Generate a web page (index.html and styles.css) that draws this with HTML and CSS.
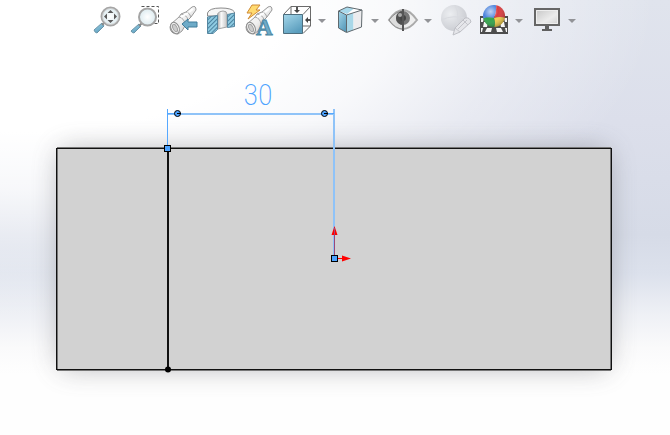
FILE: index.html
```html
<!DOCTYPE html>
<html lang="en">
<head>
<meta charset="utf-8">
<meta name="viewport" content="width=device-width, initial-scale=1">
<title>Model view</title>
<link rel="stylesheet" href="styles.css">
</head>
<body>
<svg class="defs" width="0" height="0" aria-hidden="true">
  <defs>
    <linearGradient id="blue" x1="0" y1="0" x2="0.6" y2="1"><stop offset="0" stop-color="#a5d7ea"/><stop offset="1" stop-color="#5a9dbd"/></linearGradient>
    <linearGradient id="metal" x1="0" y1="0" x2="1" y2="1"><stop offset="0" stop-color="#fff"/><stop offset="0.5" stop-color="#f0f0f0"/><stop offset="1" stop-color="#b5b5b5"/></linearGradient>
    <linearGradient id="bore"><stop offset="0" stop-color="#a8a8a8"/><stop offset="0.4" stop-color="#fafafa"/><stop offset="1" stop-color="#c4c4c4"/></linearGradient>
    <radialGradient id="glass"><stop offset="0" stop-color="#fff"/><stop offset="1" stop-color="#dcebf0"/></radialGradient>
    <radialGradient id="shine" cx="0.35" cy="0.3" r="0.75"><stop offset="0" stop-color="#fff" stop-opacity="0.65"/><stop offset="0.45" stop-color="#fff" stop-opacity="0"/><stop offset="1" stop-color="#000" stop-opacity="0.3"/></radialGradient>
    <radialGradient id="ghost" cx="0.35" cy="0.35" r="0.75"><stop offset="0" stop-color="#eceef1"/><stop offset="1" stop-color="#c7c9cf"/></radialGradient>
    <linearGradient id="screen" x1="0" y1="0" x2="1" y2="1"><stop offset="0" stop-color="#c4c4c4"/><stop offset="0.6" stop-color="#ececec"/><stop offset="1" stop-color="#cfcfcf"/></linearGradient>
    <pattern id="hatch" width="3" height="3" patternUnits="userSpaceOnUse" patternTransform="rotate(45)"><rect width="3" height="3" fill="#8ecbe2"/><rect width="1" height="3" fill="#4a829f"/></pattern>
    <clipPath id="ball"><circle cx="15" cy="12" r="11"/></clipPath>
    <symbol id="caret" viewBox="0 0 10 6"><path d="M1 1h8L5 5z" fill="#929397"/></symbol>
    <symbol id="scope" viewBox="0 0 30 34">
      <path d="M3 20L11 13L13 10L18 8L24 3Q28 1 28 6L23 13L20 16L18 20L14 27L10 30Q2 30 2 23z" fill="url(#metal)" stroke="#999"/>
      <path d="M11 13Q16 14 17 20M13 10Q19 11 20 16M18 8Q22 9 23 13" fill="none" stroke="#a8a8a8"/>
      <path d="M13 13L20 9M21 8L25 5" stroke="#fff" stroke-width="2"/>
      <ellipse cx="7" cy="24" rx="4" ry="6" transform="rotate(-25 7 24)" fill="#f5f5f5" stroke="#8c8c8c"/>
      <ellipse cx="7" cy="24" rx="2" ry="4" transform="rotate(-25 7 24)" fill="#ccc" stroke="#a0a0a0"/>
    </symbol>
  </defs>
</svg>

<header class="toolbar" role="toolbar" aria-label="View tools">
  <button class="tool" type="button" aria-label="Zoom to fit">
    <svg class="icon" viewBox="0 0 30 34"><path d="M10 19L12 22L5 29Q3 29 2 26z" fill="url(#blue)" stroke="#6a94a8"/><path d="M10 21l3-3" stroke="#888" stroke-width="2"/><circle cx="18.5" cy="12.5" r="9" fill="url(#glass)" stroke="#a5a5a5" stroke-width="2"/><circle cx="18.5" cy="12.5" r="8" fill="none" stroke="#ccc"/><path d="M18.500 6l3 3h-6zM18.500 19l3-3h-6zM12 12.500l3-3v6zM25 12.500l-3-3v6z" fill="#5a5a5a"/></svg>
  </button>
  <button class="tool" type="button" aria-label="Zoom to area">
    <svg class="icon" viewBox="0 0 30 34"><path d="M11.500 2.500H28.500V19.500H23" fill="none" stroke="#555" stroke-dasharray="3 2"/><path d="M9 20L11 22L4 29Q2 29 1 27z" fill="url(#blue)" stroke="#6a94a8"/><path d="M9 22l3-3" stroke="#888" stroke-width="2"/><circle cx="17.500" cy="13" r="8.500" fill="url(#glass)" stroke="#a5a5a5" stroke-width="2"/></svg>
  </button>
  <button class="tool" type="button" aria-label="Previous view">
    <svg class="icon" viewBox="0 0 30 34"><use href="#scope"/><path d="M14 20L20 15V18H29V23H20V26z" fill="#6eabc8" stroke="#407c9a"/></svg>
  </button>
  <button class="tool" type="button" aria-label="Section view">
    <svg class="icon" viewBox="0 0 30 34"><path d="M1.500 12V9Q3 4 15 4Q26 4 28.500 8V10L21 12L11 12z" fill="#f6f6f6" stroke="#8b8b8b"/><path d="M11.500 10Q13 7 17 7Q21 7 21 10V23L11.500 25z" fill="url(#bore)" stroke="#a5a5a5"/><path d="M1.500 13L11.500 11.500V25.500L7 29.500H1.500z" fill="url(#hatch)" stroke="#5586a0"/><path d="M21.500 10.500L28.500 9V22.500L21.500 23.500z" fill="url(#hatch)" stroke="#5586a0"/></svg>
  </button>
  <button class="tool" type="button" aria-label="Dynamic annotation views">
    <svg class="icon" viewBox="0 0 30 34"><use href="#scope"/><path d="M8 1H16L12 6H16L4 15L8 9H3z" fill="#ffda70" stroke="#cf8a35"/><text class="glyph" x="12" y="31">A</text></svg>
  </button>
  <div class="group">
    <button class="tool" type="button" aria-label="View orientation">
      <svg class="icon" viewBox="0 0 30 34"><path d="M1.500 10.500L9 2.500H28.500L21 10.500M28.500 2.500V22L21 29.500M9 2.500V10M21 22H28" fill="none" stroke="#6a6a6a"/><path d="M1.500 10.500H20.500V29.500H1.500z" fill="url(#blue)" stroke="#4d6e7e"/><path d="M15 3V8M29 16H24" stroke="#555" stroke-width="2"/><path d="M12 6H18L15 9zM26 13V19L23 16z" fill="#444"/></svg>
    </button>
    <button class="drop" type="button" aria-label="More view orientations"><svg class="caret"><use href="#caret"/></svg></button>
  </div>
  <div class="group">
    <button class="tool" type="button" aria-label="Display style">
      <svg class="icon" viewBox="0 0 30 34"><path d="M3.500 7L12 3L27 6L26.500 23L11.500 28.500L3.500 24z" fill="#fff"/><path d="M3.500 7L12 3L19 4.500L12 10z" fill="#a9d9eb"/><path d="M3.500 7L11.500 11L11.500 28.500L3.500 24z" fill="url(#blue)"/><path d="M11.500 11L18.500 9V26L11.500 28.500z" fill="#a8d7e8"/><path d="M18.500 9L26.500 6V23L18.500 26z" fill="#ececee"/><path d="M3.500 7L12 3L27 6L26.500 23L11.500 28.500L3.500 24zM3.500 7L11.500 11L27 6M11.500 11V28" fill="none" stroke="#60696e" stroke-linejoin="round"/></svg>
    </button>
    <button class="drop" type="button" aria-label="More display styles"><svg class="caret"><use href="#caret"/></svg></button>
  </div>
  <div class="group">
    <button class="tool" type="button" aria-label="Hide or show items">
      <svg class="icon" viewBox="0 0 30 34"><path d="M1 16Q8 6 15 6T29 16Q22 25 15 25T1 16z" fill="#eee" stroke="#aaa" stroke-width="2"/><path d="M1 16Q8 7 15 7V25Q7 25 1 16z" fill="#ddd" stroke="#8c8c8c"/><circle cx="15" cy="14" r="7" fill="#777"/><path d="M15 7A7 7 0 0 0 15 21z" fill="#505050"/><circle cx="15" cy="14" r="3" fill="#444"/><circle cx="12" cy="11" r="2" fill="#aaa"/><path d="M15 5V27" stroke="#555" stroke-width="2"/></svg>
    </button>
    <button class="drop" type="button" aria-label="More item visibility"><svg class="caret"><use href="#caret"/></svg></button>
  </div>
  <button class="tool" type="button" aria-label="Edit appearance" disabled>
    <svg class="icon" viewBox="0 0 30 34"><circle cx="13" cy="14" r="13" fill="url(#ghost)"/><path d="M0 16Q13 10 26 15M14 1Q20 12 14 27" fill="none" stroke="#d9dbe0"/><path d="M12 31L14 24L24 14Q29 13 30 18L19 28z" fill="#e5e6ea" stroke="#bfc0c6"/><path d="M14 24L19 28M22 16L27 21M17 25L26 16" fill="none" stroke="#c3c4ca"/></svg>
  </button>
  <div class="group">
    <button class="tool" type="button" aria-label="Apply scene">
      <svg class="icon" viewBox="0 0 30 34"><path d="M1 12H29V30H1z" fill="#4d4d4d"/><path d="M2 14H5L4 18H2zM25 14H28V18H26zM5 18H9L8 23H4zM21 18H25L26 23H22zM2 24H4L3 28H2zM8 24H13L12 28H6zM17 24H22L24 28H18zM26 24H28V28H27z" fill="#f5f5f5"/><g clip-path="url(#ball)"><path d="M4 0H17Q18 7 15 14L3 15z" fill="#4a82dc"/><path d="M17 0H27V15Q21 12 15 14Q18 7 17 0z" fill="#da3d3f"/><path d="M3 15Q9 12 15 14Q17 19 15 24H4z" fill="#32a34b"/><path d="M15 14Q21 12 27 14V24H15Q17 19 15 14z" fill="#f3cf4d"/></g><circle cx="15" cy="12" r="11" fill="url(#shine)"/></svg>
    </button>
    <button class="drop" type="button" aria-label="More scenes"><svg class="caret"><use href="#caret"/></svg></button>
  </div>
  <div class="group">
    <button class="tool" type="button" aria-label="View settings">
      <svg class="icon" viewBox="0 0 30 34"><path d="M13 22H17V25H20V27H10V25H13z" fill="#606060"/><path d="M3 5H27V21H3z" fill="url(#screen)" stroke="#666" stroke-width="2"/><path d="M4.500 6.500H25.500V19.500H4.500z" fill="none" stroke="#eee"/></svg>
    </button>
    <button class="drop" type="button" aria-label="More view settings"><svg class="caret"><use href="#caret"/></svg></button>
  </div>
</header>

<main class="stage">
  <svg class="model" viewBox="0 40 670 395" role="img" aria-label="Plate with a 30 dimension">
    <defs><filter id="soft" x="-10%" y="-20%" width="120%" height="140%"><feGaussianBlur stdDeviation="14"/></filter></defs>
    <rect class="shadow" x="60" y="150" width="548" height="218" rx="6" filter="url(#soft)"/>
    <path class="edge-soft" d="M57 147.500H611M57 370.500H611"/>
    <rect class="face" x="56.500" y="148.500" width="555" height="221"/>
    <path class="edge-soft" d="M57.500 149V369M610.500 149V369"/>
    <path class="split" d="M168 149V370"/>
    <circle cx="168" cy="369.500" r="3"/>
    <path class="extension" d="M167.500 109V146"/>
    <path class="dimension" d="M168 114H334M334 109V256"/>
    <path class="extension" d="M168 113.500H178M325 113.500H334"/>
    <text class="value" x="258" y="105">30</text>
    <g class="handle">
      <circle cx="177.500" cy="113.500" r="3"/><path d="M177 113.500H181"/>
      <circle cx="324.500" cy="113.500" r="3"/><path d="M324 113.500H328"/>
    </g>
    <path class="axis-up" d="M334.500 256V235"/>
    <path class="axis-head" d="M334.500 226L337.500 235H331.500zM351 258.500L342 255.500V261.500z"/>
    <path class="axis" d="M338 258.500H343"/>
    <path class="axis-up" d="M334.500 228V235"/>
    <g class="handle"><rect x="164.500" y="145.500" width="6" height="6"/><rect x="331.500" y="255.500" width="6" height="6"/></g>
  </svg>
</main>
</body>
</html>
```
FILE: styles.css
```css
* { box-sizing: border-box; }

body {
  margin: 0;
  min-height: 100vh;
  overflow-x: hidden;
  font-family: "Liberation Sans", sans-serif;
  background:
    radial-gradient(ellipse 92% 72% at 4% 0%, #fff 42%, rgba(255, 255, 255, 0.8) 60%, rgba(255, 255, 255, 0.35) 80%, transparent 102%),
    linear-gradient(#e0e4ed 0%, #dcdfeb 28%, #d6dbe7 54%, #dce1ec 63%, #eef0f5 72%, #fafafb 80%, #fefefe 86%);
}

.defs { position: absolute; }

.toolbar {
  display: flex;
  justify-content: center;
  gap: 8px;
  height: 40px;
  padding: 4px 2px 0 0;
}

.group {
  display: flex;
  gap: 5px;
}

.tool,
.drop {
  flex: none;
  display: flex;
  align-items: center;
  height: 34px;
  padding: 0;
  border: 0;
  background: none;
}

.tool { width: 30px; }
.drop { width: 10px; }

.icon {
  width: 30px;
  height: 34px;
  overflow: visible;
}

.caret {
  width: 10px;
  height: 6px;
}

.glyph {
  font: bold 23px "Liberation Serif", serif;
  fill: #6fabc8;
  stroke: #4d88a4;
}

.model {
  display: block;
  width: 100%;
}

.shadow { fill: #55555c; opacity: 0.42; }
.face { fill: #d2d2d2; stroke: #111; }
.edge-soft { stroke: #777; }
.split { stroke: #111; stroke-width: 2; }
.extension { stroke: #55a8ff; }
.dimension { fill: none; stroke: #8fc3f8; stroke-width: 2; }
.handle { fill: #4da3ff; stroke: #000; }
.axis { stroke: #f00; }
.axis-up { stroke: #9a4878; }
.axis-head { fill: #f00; }

.value {
  font-family: "Roboto Condensed", "Roboto", sans-serif;
  font-size: 30px;
  font-weight: 200;
  text-anchor: middle;
  fill: #4da3ff;
}
```
